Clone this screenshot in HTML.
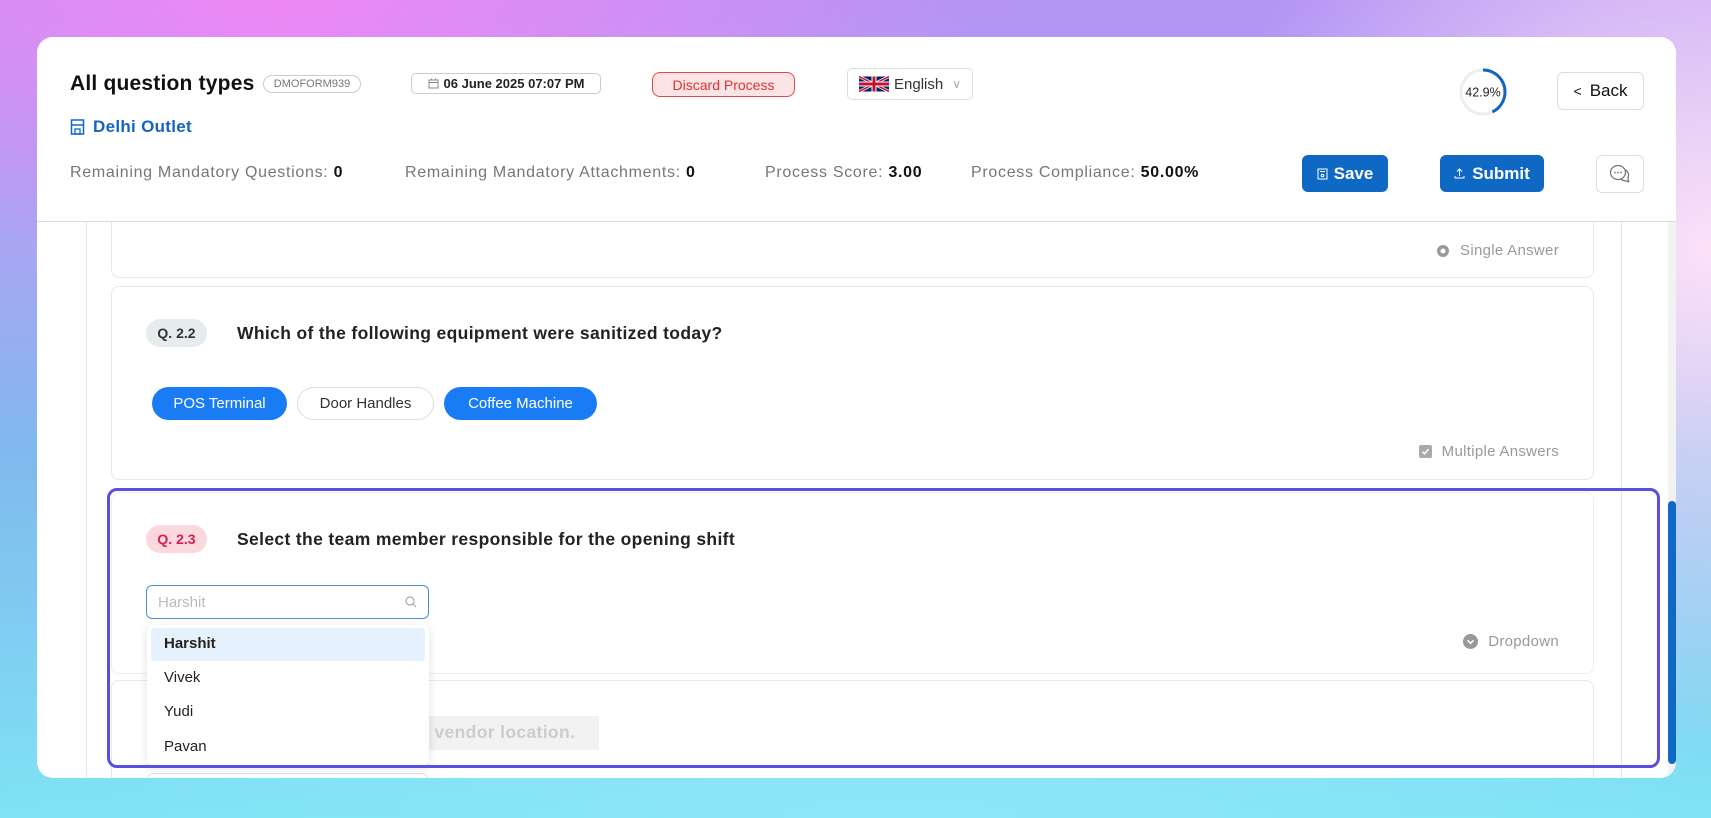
<!DOCTYPE html>
<html><head><meta charset="utf-8"><style>
*{box-sizing:border-box;margin:0;padding:0}
body{width:1711px;height:818px;overflow:hidden;font-family:"Liberation Sans",sans-serif;position:relative;
background:
radial-gradient(ellipse 700px 260px at 280px 0px,rgba(245,135,245,.9),rgba(245,135,245,0) 100%),
radial-gradient(ellipse 500px 500px at 1711px 250px,rgba(252,225,248,1),rgba(252,225,248,0) 100%),
radial-gradient(ellipse 900px 200px at 900px 818px,rgba(140,232,248,1),rgba(140,232,248,0) 100%),
linear-gradient(180deg,#b494f4 0%,#a9a6f2 30%,#80b8ee 55%,#7fe3f5 100%);}
.card{position:absolute;left:37px;top:37px;width:1639px;height:741px;background:#fff;border-radius:16px;overflow:hidden}
.abs{position:absolute}
.hdr{position:absolute;left:0;top:0;width:100%;height:185px;background:#fff;border-bottom:1px solid #dcdcdc;z-index:5}
.t{color:#111;white-space:nowrap}
.btn{position:absolute;border-radius:6px;display:flex;align-items:center;justify-content:center;white-space:nowrap}
.qcard{position:absolute;left:74px;width:1483px;border:1px solid #e8e8e8;border-radius:8px;background:#fff}
.badge{position:absolute;border-radius:14px;font-size:14px;font-weight:bold;display:flex;align-items:center;justify-content:center}
.qt{position:absolute;font-size:17.5px;font-weight:bold;color:#222;white-space:nowrap;letter-spacing:.35px}
.type{position:absolute;right:34px;font-size:15px;color:#999;display:flex;align-items:center;gap:10px;letter-spacing:.3px}
.chip{position:absolute;top:100px;height:33px;border-radius:17px;font-size:15px;display:flex;align-items:center;justify-content:center}
.st{position:absolute;top:127px;font-size:16px;color:#777;white-space:nowrap;letter-spacing:.7px}
</style></head><body>
<div class="card">
 <div class="hdr">
  <div class="abs t" style="left:33px;top:35px;font-size:21px;font-weight:bold;letter-spacing:.2px">All question types</div>
  <div class="abs" style="left:226px;top:38px;width:98px;height:18px;border:1px solid #ccc;border-radius:9px;font-size:11px;color:#777;display:flex;align-items:center;justify-content:center">DMOFORM939</div>
  <div class="abs" style="left:374px;top:36px;width:190px;height:21px;border:1px solid #ccc;border-radius:5px;font-size:13px;font-weight:bold;color:#222;display:flex;align-items:center;justify-content:center;gap:5px">
    <svg width="11" height="11" viewBox="0 0 11 11"><rect x="1" y="2" width="9" height="8" fill="none" stroke="#888"/><line x1="1" y1="4.5" x2="10" y2="4.5" stroke="#888"/><line x1="3.5" y1="0.5" x2="3.5" y2="2.5" stroke="#888"/><line x1="7.5" y1="0.5" x2="7.5" y2="2.5" stroke="#888"/></svg>06 June 2025 07:07 PM</div>
  <div class="abs" style="left:615px;top:35px;width:143px;height:25px;border:1px solid #e04a4a;background:#fde4e4;border-radius:8px;font-size:14px;color:#d33;display:flex;align-items:center;justify-content:center">Discard Process</div>
  <div class="abs" style="left:810px;top:31px;width:126px;height:32px;border:1px solid #ddd;border-radius:5px;font-size:15px;color:#333;display:flex;align-items:center;padding-left:11px;gap:5px">
    <svg width="30" height="16" viewBox="0 0 60 30"><rect width="60" height="30" fill="#012169"/><path d="M0,0 L60,30 M60,0 L0,30" stroke="#fff" stroke-width="6"/><path d="M0,0 L60,30 M60,0 L0,30" stroke="#C8102E" stroke-width="3"/><path d="M30,0 V30 M0,15 H60" stroke="#fff" stroke-width="10"/><path d="M30,0 V30 M0,15 H60" stroke="#C8102E" stroke-width="6"/></svg>English <span style="color:#aaa;font-size:12px;margin-left:4px">&#8744;</span></div>
  <svg class="abs" style="left:1421px;top:30px" width="50" height="50" viewBox="0 0 50 50"><circle cx="25" cy="25" r="22" fill="none" stroke="#eee" stroke-width="3"/><circle cx="25" cy="25" r="22" fill="none" stroke="#1565c0" stroke-width="3" stroke-dasharray="59.3 200" transform="rotate(-90 25 25)"/><text x="25" y="29.5" text-anchor="middle" font-size="12.5" font-family="Liberation Sans" fill="#222">42.9%</text></svg>
  <div class="btn" style="left:1520px;top:35px;width:87px;height:38px;border:1px solid #ddd;font-size:17px;color:#111;gap:8px"><span style="font-size:14px">&lt;</span>Back</div>
  <div class="abs" style="left:33px;top:80px;font-size:17px;font-weight:bold;color:#1565c0;display:flex;align-items:center;gap:8px;letter-spacing:.3px">
    <svg width="15" height="16" viewBox="0 0 15 16"><rect x="1.5" y="1" width="12" height="14" fill="none" stroke="#1565c0" stroke-width="1.5"/><line x1="1.5" y1="6" x2="13.5" y2="6" stroke="#1565c0" stroke-width="1.5"/><rect x="5" y="10" width="5" height="5" fill="none" stroke="#1565c0" stroke-width="1.3"/></svg>Delhi Outlet</div>
  <div class="st" style="left:33px">Remaining Mandatory Questions: <b style="color:#111">0</b></div>
  <div class="st" style="left:368px">Remaining Mandatory Attachments: <b style="color:#111">0</b></div>
  <div class="st" style="left:728px">Process Score: <b style="color:#111">3.00</b></div>
  <div class="st" style="left:934px">Process Compliance: <b style="color:#111">50.00%</b></div>
  <div class="btn" style="left:1265px;top:118px;width:86px;height:37px;background:#0f68c4;color:#fff;font-size:17px;font-weight:bold;gap:6px"><svg width="11" height="12" viewBox="0 0 11 12"><rect x="1" y="1" width="9" height="10" fill="none" stroke="#fff"/><circle cx="5.5" cy="7.5" r="1.3" fill="none" stroke="#fff"/><line x1="3" y1="3.5" x2="8" y2="3.5" stroke="#fff"/></svg>Save</div>
  <div class="btn" style="left:1403px;top:118px;width:104px;height:37px;background:#0f68c4;color:#fff;font-size:17px;font-weight:bold;gap:7px"><svg width="11" height="11" viewBox="0 0 11 11"><path d="M5.5 8V1M3 3.5L5.5 1L8 3.5M1 8v2h9V8" fill="none" stroke="#fff"/></svg>Submit</div>
  <div class="btn" style="left:1559px;top:118px;width:48px;height:38px;border:1px solid #ddd"><svg width="22" height="20" viewBox="0 0 22 20"><ellipse cx="9" cy="8.5" rx="7.5" ry="7" fill="none" stroke="#777" stroke-width="1.3"/><path d="M12 15.5 C15 17 18 17 20 18 C18.5 16 19 14 19.5 12 C20 10 18.5 7 16.5 6" fill="none" stroke="#777" stroke-width="1.3"/><circle cx="6" cy="8.5" r=".9" fill="#777"/><circle cx="9" cy="8.5" r=".9" fill="#777"/><circle cx="12" cy="8.5" r=".9" fill="#777"/></svg></div>
 </div>
  <div class="abs" style="left:49px;top:185px;width:1px;height:560px;background:#e6e6e6"></div>
  <div class="abs" style="left:1584px;top:185px;width:1px;height:560px;background:#e6e6e6"></div>
  <div class="abs" style="left:1631px;top:185px;width:8px;height:560px;background:#f2f2f2"></div>
  <div class="abs" style="left:1631px;top:464px;width:8px;height:263px;background:#0f68c4;border-radius:4px"></div>

  <div class="qcard" style="top:150px;height:91px"><div class="type" style="top:54px"><svg width="14" height="14"><circle cx="7" cy="7" r="6" fill="#999"/><circle cx="7" cy="7" r="2.5" fill="#fff"/></svg>Single Answer</div></div>

  <div class="qcard" style="top:249px;height:194px">
    <div class="badge" style="left:34px;top:32px;width:61px;height:28px;background:#e6ecee;color:#333">Q. 2.2</div>
    <div class="qt" style="left:125px;top:36px">Which of the following equipment were sanitized today?</div>
    <div class="chip" style="left:40px;width:135px;background:#1a7cf5;color:#fff">POS Terminal</div>
    <div class="chip" style="left:185px;width:137px;border:1px solid #ddd;color:#333">Door Handles</div>
    <div class="chip" style="left:332px;width:153px;background:#1a7cf5;color:#fff">Coffee Machine</div>
    <div class="type" style="top:156px"><svg width="13" height="13"><rect width="13" height="13" rx="2" fill="#aaa"/><path d="M3.5 6.8l2 2 4-4.5" fill="none" stroke="#fff" stroke-width="1.5"/></svg>Multiple Answers</div>
  </div>

  <div class="qcard" style="top:455px;height:182px;border-color:#eee">
    <div class="badge" style="left:34px;top:32px;width:61px;height:28px;background:#fbd7de;color:#d62050">Q. 2.3</div>
    <div class="qt" style="left:125px;top:36px">Select the team member responsible for the opening shift</div>
    <div class="type" style="top:140px"><svg width="15" height="15"><circle cx="7.5" cy="7.5" r="7.5" fill="#999"/><path d="M4.5 6.3l3 3 3-3" fill="none" stroke="#fff" stroke-width="1.5"/></svg>Dropdown</div>
  </div>
  <div class="qcard" style="top:643px;height:120px">
    <div class="abs" style="left:294px;top:35px;width:193px;height:34px;background:#f2f2f2"></div>
    <div class="abs" style="left:300px;top:41px;font-size:17.5px;font-weight:bold;color:#ccc;letter-spacing:.35px">ry vendor location.</div>
    <div class="abs" style="left:34px;top:92px;width:283px;height:40px;border:1px solid #ddd;border-radius:8px"></div>
  </div>

  <div class="abs" style="left:109px;top:548px;width:283px;height:34px;border:1.5px solid #4a8fd9;border-radius:6px;font-size:15px;color:#bbb;padding:8px 11px">Harshit
    <svg class="abs" style="right:11px;top:10px" width="12" height="12"><circle cx="5" cy="5" r="4" fill="none" stroke="#aaa" stroke-width="1.2"/><line x1="8" y1="8" x2="11" y2="11" stroke="#aaa" stroke-width="1.2"/></svg></div>
  <div class="abs" style="left:110px;top:588px;width:282px;height:140px;background:#fff;border-radius:6px;box-shadow:0 3px 10px rgba(0,0,0,.12)">
    <div class="abs" style="left:4px;top:3px;width:274px;height:33px;background:#e5f2fd;border-radius:4px"></div>
    <div class="abs" style="left:17px;top:10px;font-size:15px;font-weight:bold;color:#222">Harshit</div>
    <div class="abs" style="left:17px;top:44px;font-size:15px;color:#222">Vivek</div>
    <div class="abs" style="left:17px;top:78px;font-size:15px;color:#222">Yudi</div>
    <div class="abs" style="left:17px;top:113px;font-size:15px;color:#222">Pavan</div>
  </div>
  <div class="abs" style="left:70px;top:451px;width:1553px;height:280px;border:3px solid #5a4fe0;border-radius:10px"></div>
</div>
</body></html>
